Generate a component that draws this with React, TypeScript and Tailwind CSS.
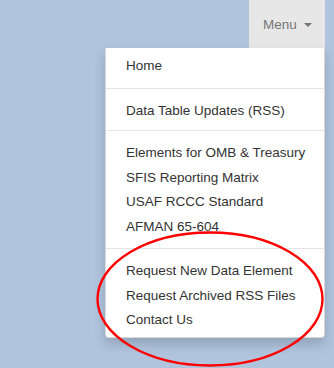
import React from "react";

const Row = ({ children }: { children: React.ReactNode }) => (
  <a className="flex h-[24.6px] items-center whitespace-nowrap px-[20px] pt-[1.5px] text-[#333] text-[13.5px]">
    {children}
  </a>
);

export default function App() {
  return (
    <div
      className="relative h-[368px] w-full overflow-hidden bg-[#b0c4de]"
      style={{ fontFamily: '"Liberation Sans", Arial, sans-serif' }}
    >
      <div className="flex justify-end pr-[9px]">
        <div className="relative">
          <button className="flex h-[48px] w-[76px] items-center bg-[#e7e7e7] pl-[14px] pt-[1.5px] text-[13.5px] text-[#777]">
            <span>Menu</span>
            <span className="ml-[7px] mt-[1px] h-0 w-0 border-x-[4px] border-t-[4px] border-x-transparent border-t-[#777]" />
          </button>
          <div className="absolute right-0 top-[48px] w-[220px] rounded-b-[4px] border border-t-0 border-[rgba(0,0,0,0.15)] bg-white pb-[5px] pt-[5px] shadow-[0_6px_12px_rgba(0,0,0,0.175)]">
            <Row>Home</Row>
            <div className="mt-[10px] h-px bg-[#e5e5e5]" />
            <div className="mt-[9px]">
              <Row>Data Table Updates (RSS)</Row>
            </div>
            <div className="mt-[8px] h-px bg-[#e5e5e5]" />
            <div className="mt-[9px]">
              <Row>Elements for OMB &amp; Treasury</Row>
              <Row>SFIS Reporting Matrix</Row>
              <Row>USAF RCCC Standard</Row>
              <Row>AFMAN 65-604</Row>
            </div>
            <div className="mt-[9.6px] h-px bg-[#e5e5e5]" />
            <div className="mt-[9px]">
              <Row>Request New Data Element</Row>
              <Row>Request Archived RSS Files</Row>
              <Row>Contact Us</Row>
            </div>
          </div>
        </div>
      </div>
      <svg
        className="pointer-events-none absolute left-0 top-0"
        width="334"
        height="368"
        viewBox="0 0 334 368"
      >
        <ellipse
          cx="210"
          cy="299"
          rx="112.5"
          ry="66.5"
          fill="none"
          stroke="#ff0000"
          strokeWidth="2.4"
        />
      </svg>
    </div>
  );
}
